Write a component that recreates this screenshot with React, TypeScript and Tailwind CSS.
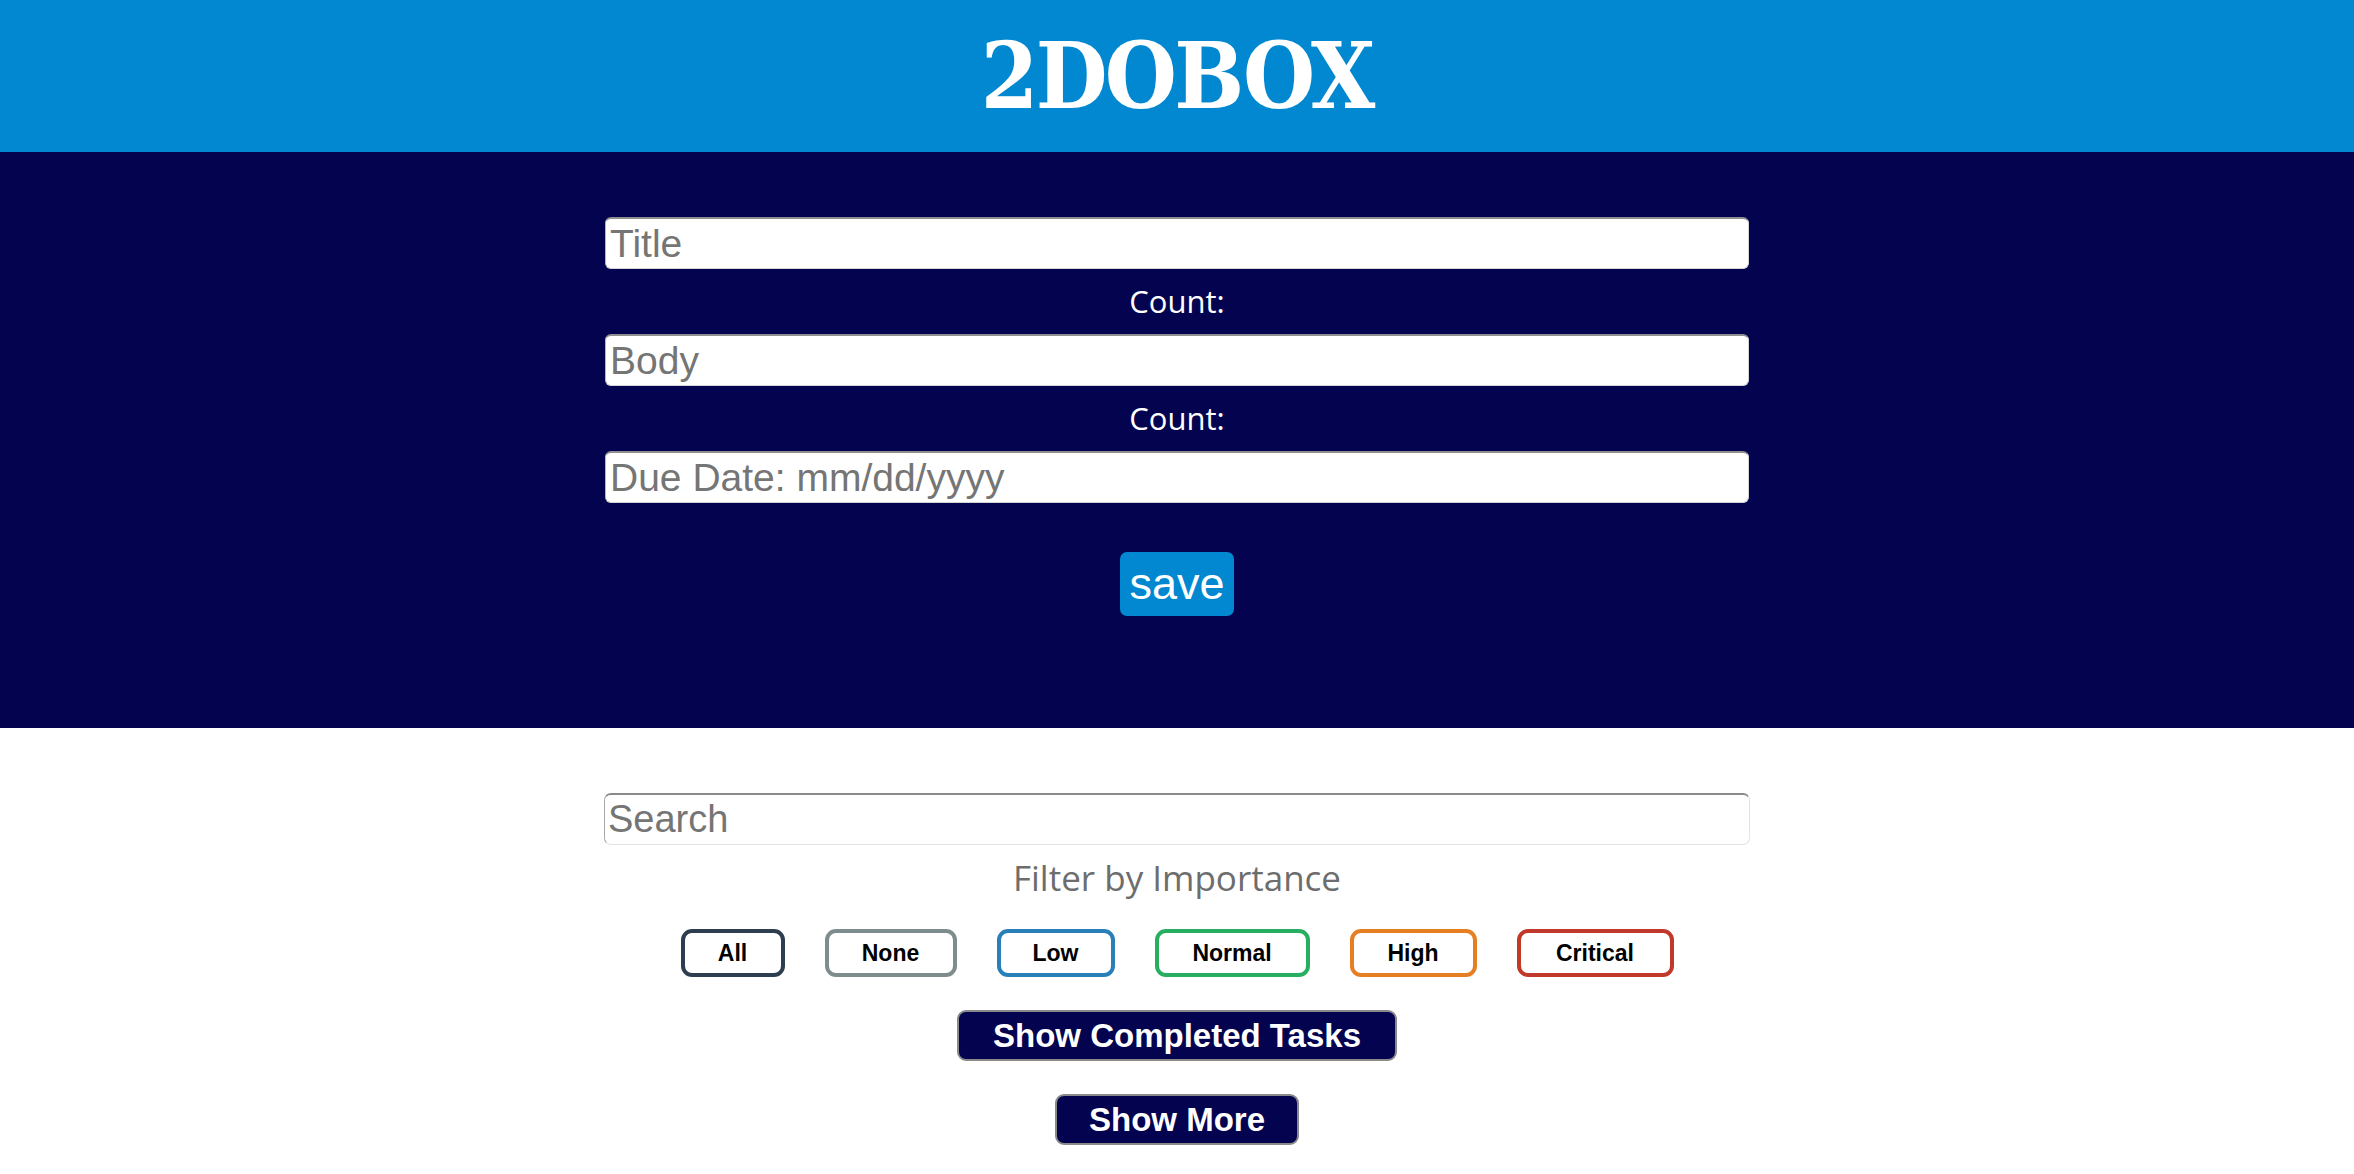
import React from 'react';

const filters = [
  { label: 'All', border: 'border-[#2c3e50]', width: 'w-[104px]' },
  { label: 'None', border: 'border-[#7f8c8d]', width: 'w-[132px]' },
  { label: 'Low', border: 'border-[#2980b9]', width: 'w-[118px]' },
  { label: 'Normal', border: 'border-[#27ae60]', width: 'w-[155px]' },
  { label: 'High', border: 'border-[#e67e22]', width: 'w-[127px]' },
  { label: 'Critical', border: 'border-[#c0392b]', width: 'w-[157px]' },
];

const inputClass =
  "block w-[1144px] h-[52px] rounded-[6px] bg-white px-[4px] text-[39px] leading-none text-black font-['Liberation_Sans',Arial,sans-serif] border border-[#d4d4d4] border-t-2 border-t-[#8f8f8f] border-l-[#b5b5b5] outline-none placeholder:text-[#757575]";

const App: React.FC = () => {
  return (
    <div className="min-h-screen bg-white">
      {/* header */}
      <header className="h-[152px] bg-[#0288d1] flex items-center justify-center">
        <h1 className="text-white font-bold text-[92px] leading-none tracking-[-3px] font-['DejaVu_Serif',serif] scale-x-[0.9]">
          2DOBOX
        </h1>
      </header>

      {/* new task form */}
      <section className="h-[576px] bg-[#03034f] flex flex-col items-center pt-[65px]">
        <input className={inputClass} placeholder="Title" />
        <p className="h-[65px] flex items-center text-white text-[31px] font-['Open_Sans',sans-serif]">
          Count:
        </p>
        <input className={inputClass} placeholder="Body" />
        <p className="h-[65px] flex items-center text-white text-[31px] font-['Open_Sans',sans-serif]">
          Count:
        </p>
        <input className={inputClass} placeholder="Due Date: mm/dd/yyyy" />
        <button className="mt-[49px] w-[114px] h-[64px] rounded-[7px] bg-[#0288d1] text-white text-[45px] leading-none pb-[1px] font-['Liberation_Sans',Arial,sans-serif]">
          save
        </button>
      </section>

      {/* search + filters */}
      <section className="flex flex-col items-center pt-[65px] pb-[29px]">
        <input
          className="block w-[1146px] h-[52px] rounded-[7px] bg-white px-[3px] text-[38px] leading-none text-black font-['Liberation_Sans',Arial,sans-serif] border border-[#e3e3e3] border-t-2 border-t-[#8a8a8a] border-l-[#a8a8a8] outline-none placeholder:text-[#757575]"
          placeholder="Search"
        />
        <p className="mt-[13px] text-[35px] leading-[40px] text-[#6d6d6d] font-['Open_Sans',sans-serif]">
          Filter by Importance
        </p>
        <div className="mt-[31px] flex items-center gap-[40px]">
          {filters.map((f) => (
            <button
              key={f.label}
              className={`${f.width} ${f.border} h-[48px] border-4 rounded-[11px] bg-white text-black font-bold text-[23px] font-['Liberation_Sans',Arial,sans-serif]`}
            >
              {f.label}
            </button>
          ))}
        </div>
        <button className="mt-[33px] w-[440px] h-[51px] rounded-[9px] bg-[#03034f] border-2 border-[#8a8a8a] text-white font-bold text-[33px] leading-none font-['Liberation_Sans',Arial,sans-serif]">
          Show Completed Tasks
        </button>
        <button className="mt-[33px] w-[244px] h-[51px] rounded-[9px] bg-[#03034f] border-2 border-[#8a8a8a] text-white font-bold text-[33px] leading-none font-['Liberation_Sans',Arial,sans-serif]">
          Show More
        </button>
      </section>
    </div>
  );
};

export default App;
